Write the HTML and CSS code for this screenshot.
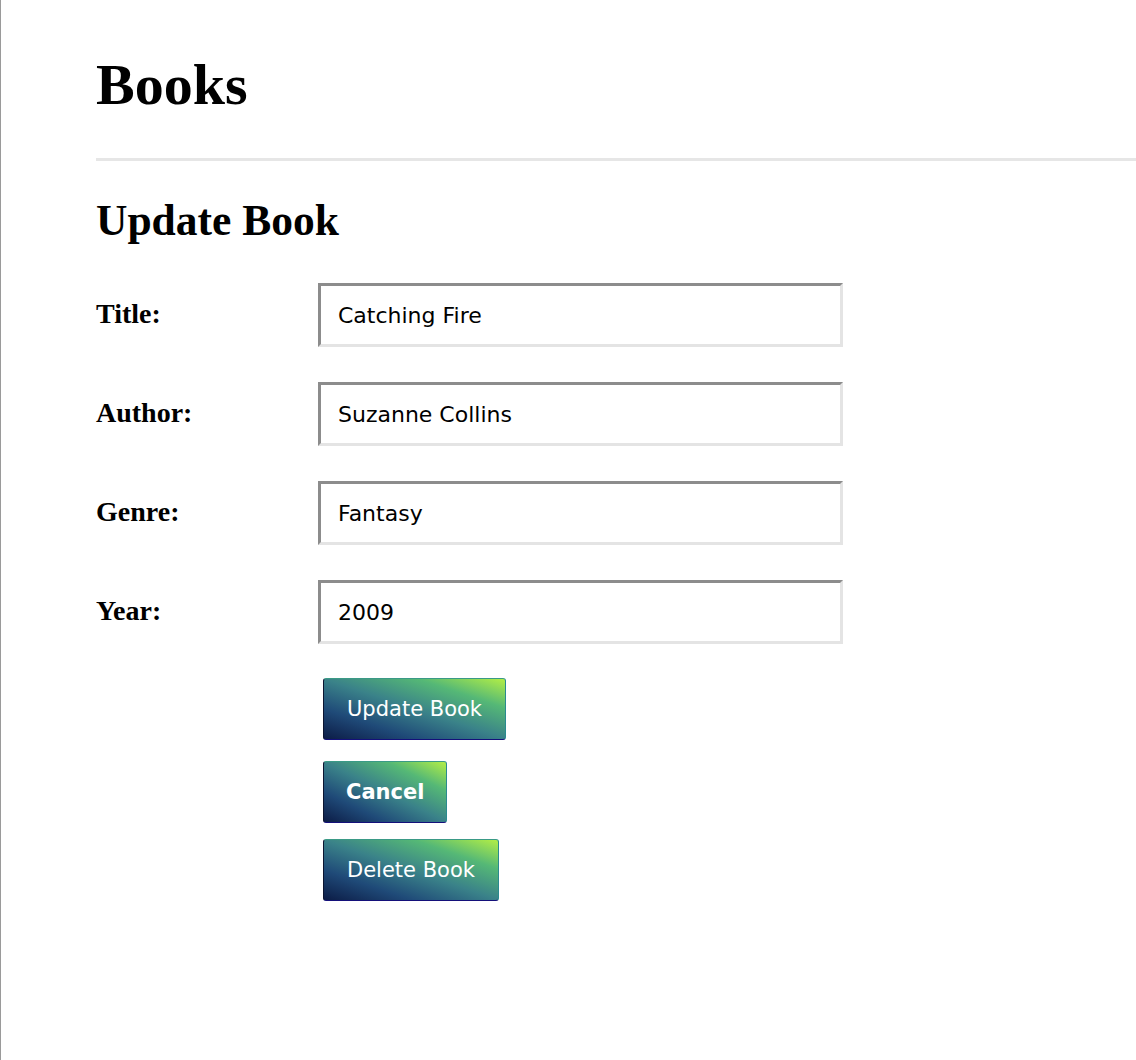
FILE: index.html
```html
<!DOCTYPE html>
<html lang="en">
<head>
<meta charset="utf-8">
<title>Books</title>
<link rel="stylesheet" href="styles.css">
</head>
<body>
<div class="page">
  <h1 class="title">Books</h1>
  <hr class="rule">
  <h2 class="subtitle">Update Book</h2>
  <form class="form">
    <div class="field">
      <label class="label" for="title">Title:</label>
      <input class="input" id="title" type="text" value="Catching Fire">
    </div>
    <div class="field">
      <label class="label" for="author">Author:</label>
      <input class="input" id="author" type="text" value="Suzanne Collins">
    </div>
    <div class="field">
      <label class="label" for="genre">Genre:</label>
      <input class="input" id="genre" type="text" value="Fantasy">
    </div>
    <div class="field">
      <label class="label" for="year">Year:</label>
      <input class="input" id="year" type="text" value="2009">
    </div>
    <div class="actions">
      <button class="btn btn-update" type="button">Update Book</button>
      <button class="btn btn-cancel" type="button">Cancel</button>
      <button class="btn btn-delete" type="button">Delete Book</button>
    </div>
  </form>
</div>
</body>
</html>
```

FILE: styles.css
```css
html, body {
  margin: 0;
  padding: 0;
  background: #ffffff;
}

body {
  border-left: 1px solid #9a9a9a;
  min-height: 1060px;
  box-sizing: border-box;
  font-family: "Liberation Serif", "Times New Roman", serif;
  color: #000;
}

.page {
  display: flex;
  flex-direction: column;
  padding: 50px 0 0 95px;
}

.title {
  margin: 0;
  font-size: 58px;
  line-height: 70px;
  font-weight: bold;
}

.rule {
  margin: 38px 0 0 0;
  height: 3px;
  border: 0;
  background: #e6e6e6;
}

.subtitle {
  margin: 33px 0 0 0;
  font-size: 43.5px;
  line-height: 52px;
  font-weight: bold;
}

.form {
  display: flex;
  flex-direction: column;
  margin-top: 37px;
}

.field {
  display: flex;
  align-items: baseline;
}

.field + .field {
  margin-top: 35px;
}

.label {
  width: 222px;
  flex: none;
  font-size: 28px;
  font-weight: bold;
}

.input {
  box-sizing: border-box;
  width: 525px;
  height: 64px;
  margin: 0;
  padding: 1px 0 0 17px;
  border-style: solid;
  border-width: 3px;
  border-color: #8c8c8c #e4e4e4 #e4e4e4 #8c8c8c;
  font-family: "DejaVu Sans", "Verdana", sans-serif;
  font-size: 22px;
  color: #000;
  background: #fff;
  outline: none;
}

.actions {
  display: flex;
  flex-direction: column;
  align-items: flex-start;
  margin: 34px 0 0 227px;
}

.btn {
  box-sizing: border-box;
  height: 62px;
  margin: 0;
  padding: 0 23px;
  border: 1px solid;
  border-color: #3a9a86 #2a8a90 #14107a #0c1430;
  border-radius: 3px;
  background: linear-gradient(to top right, #0c1c46 0%, #1f4a78 25%, #3a8289 50%, #55b876 76%, #b2ee46 100%);
  color: #ffffff;
  font-family: "DejaVu Sans", "Verdana", sans-serif;
  font-size: 21px;
  font-weight: normal;
  cursor: pointer;
}

.btn-cancel {
  margin-top: 21px;
  padding: 0 22px;
  font-weight: bold;
  font-size: 21px;
}

.btn-delete {
  margin-top: 16px;
}
```
